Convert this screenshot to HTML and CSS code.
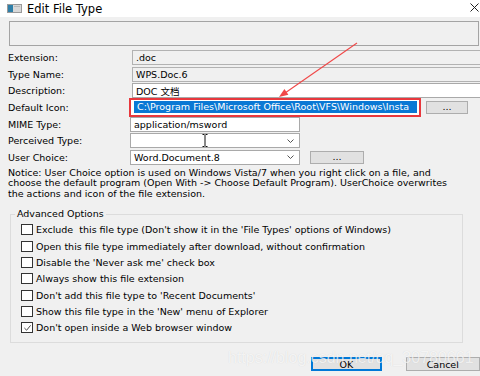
FILE: index.html
```html
<!DOCTYPE html>
<html>
<head>
<meta charset="utf-8">
<link rel="stylesheet" href="styles.css">
</head>
<body>
<div class="window">
  <div class="titlebar">
    <svg class="app-icon" viewBox="0 0 15 9"><rect x="0.5" y="0.5" width="14" height="8" fill="#d8d8d8" stroke="#9a9a9a"/><rect x="1" y="1" width="5" height="7" fill="#2f7fa8"/><rect x="7" y="2" width="6" height="1" fill="#b8b8b8"/></svg>
    <span class="title">Edit File Type</span>
    <svg class="close" viewBox="0 0 9 9"><path d="M0.5 0.5 L8.5 8.5 M8.5 0.5 L0.5 8.5" stroke="#222" stroke-width="1"/></svg>
  </div>
  <div class="content">
    <div class="top-panel"></div>
    <div class="form">
      <label>Extension:</label>
      <div class="field readonly wide">.doc</div>
      <label>Type Name:</label>
      <div class="field readonly wide">WPS.Doc.6</div>
      <label>Description:</label>
      <div class="field wide">DOC 文档</div>
      <label>Default Icon:</label>
      <div class="row">
        <div class="field icon-field"><span class="sel">C:\Program Files\Microsoft Office\Root\VFS\Windows\Insta</span></div>
        <button class="btn dots icon-dots">...</button>
      </div>
      <label>MIME Type:</label>
      <div class="row"><div class="field narrow">application/msword</div></div>
      <label>Perceived Type:</label>
      <div class="row"><div class="field narrow combo"><span></span><svg class="chev" viewBox="0 0 7 4"><path d="M0.5 0.5 L3.5 3.5 L6.5 0.5" fill="none" stroke="#555"/></svg></div></div>
      <label>User Choice:</label>
      <div class="row">
        <div class="field narrow combo"><span>Word.Document.8</span><svg class="chev" viewBox="0 0 7 4"><path d="M0.5 0.5 L3.5 3.5 L6.5 0.5" fill="none" stroke="#555"/></svg></div>
        <button class="btn dots choice-dots">...</button>
      </div>
    </div>
    <p class="notice">Notice: User Choice option is used on Windows Vista/7 when you right click on a file, and<br>choose the default program (Open With -&gt; Choose Default Program). UserChoice overwrites<br>the actions and icon of the file extension.</p>
    <fieldset class="group">
      <legend>Advanced Options</legend>
      <div class="check"><span class="box"></span>Exclude&nbsp; this file type (Don't show it in the 'File Types' options of Windows)</div>
      <div class="check"><span class="box"></span>Open this file type immediately after download, without confirmation</div>
      <div class="check"><span class="box"></span>Disable the 'Never ask me' check box</div>
      <div class="check"><span class="box"></span>Always show this file extension</div>
      <div class="check"><span class="box"></span>Don't add this file type to 'Recent Documents'</div>
      <div class="check"><span class="box"></span>Show this file type in the 'New' menu of Explorer</div>
      <div class="check"><span class="box"><svg viewBox="0 0 10 9"><path d="M1.5 4.5 L4 7 L8.5 1.5" fill="none" stroke="#333" stroke-width="1"/></svg></span>Don't open inside a Web browser window</div>
    </fieldset>
    <div class="footer">
      <button class="btn ok">OK</button>
      <button class="btn cancel">Cancel</button>
    </div>
  </div>
  <svg class="annot" viewBox="0 0 480 376">
    <path d="M357 43 L285 93" stroke="#f04848" stroke-width="1.1" fill="none"/>
    <polygon points="279,97 288.4,94.8 284.4,89" fill="#f04848"/>
    <path d="M202.5 134.5 H204.5 M205.5 134.5 H207.5 M205 135 V146 M202.5 146.5 H204.5 M205.5 146.5 H207.5" stroke="#111" stroke-width="1" fill="none"/>
  </svg>
  <div class="watermark">https://blog.csdn.net/qq_30780661</div>
</div>
</body>
</html>
```
FILE: styles.css
```css
html, body {
  margin: 0;
  background: #f0f0f0;
}
body {
  font-family: "DejaVu Sans", "Noto Sans CJK SC", sans-serif;
  font-size: 9.5px;
  color: #000;
}
.window {
  position: relative;
  width: 480px;
  height: 376px;
  overflow: hidden;
  background: #f0f0f0;
}
.titlebar {
  height: 17px;
  background: #fff;
  display: flex;
  align-items: center;
}
.app-icon {
  width: 15px;
  height: 9px;
  margin-left: 7px;
}
.title {
  margin-left: 5px;
  font-size: 11.5px;
}
.close {
  width: 9px;
  height: 9px;
  margin-left: auto;
  margin-right: 1px;
  margin-top: -2px;
}
.content {
  padding: 4px 0 0 8px;
}
.top-panel {
  margin-left: 1px;
  width: 468px;
  height: 23px;
  border: 1px solid #a4a4a4;
}
.form {
  display: grid;
  grid-template-columns: 122px 1fr;
  grid-auto-rows: 15px;
  row-gap: 1.67px;
  margin-top: 4px;
}
.form label {
  display: flex;
  align-items: center;
}
.row {
  display: flex;
  align-items: center;
}
.field {
  box-sizing: border-box;
  height: 15px;
  border: 1px solid #a9a9a9;
  background: #fff;
  display: flex;
  align-items: center;
  padding-left: 3px;
  white-space: nowrap;
  overflow: hidden;
}
.readonly {
  background: #f0f0f0;
  border-color: #b2b2b2;
}
.wide {
  margin-left: 2px;
  width: 370px;
}
.narrow {
  width: 170px;
}
.combo {
  justify-content: space-between;
  padding-right: 5px;
}
.chev {
  width: 7px;
  height: 4px;
}
.icon-field {
  margin-left: 1px;
  width: 288px;
  padding: 1px 1px 1px 2px;
  border-color: #fff;
  outline: 2px solid #e8383d;
}
.sel {
  display: block;
  height: 12px;
  line-height: 12px;
  background: #0a78d4;
  color: #fff;
  padding-left: 3px;
  flex: 1;
  overflow: hidden;
  white-space: nowrap;
}
.btn {
  box-sizing: border-box;
  height: 13px;
  border: 1px solid #adadad;
  background: #e1e1e1;
  font: inherit;
  color: #000;
  padding: 0;
  display: flex;
  align-items: center;
  justify-content: center;
}
.dots {
  line-height: 1;
  padding-bottom: 2px;
}
.icon-dots {
  margin-left: 7px;
  width: 42px;
}
.choice-dots {
  margin-left: 10px;
  width: 54px;
}
.notice {
  margin: 3px 0 0 0;
  line-height: 10.5px;
  white-space: nowrap;
}
.group {
  box-sizing: border-box;
  margin: 9px 0 0 2px;
  width: 453px;
  border: 1px solid #dcdcdc;
  padding: 1px 0 6px 10px;
}
.group legend {
  padding: 0 2px;
  margin-left: -6px;
  line-height: 12px;
}
.check {
  display: flex;
  align-items: center;
  height: 16.4px;
  white-space: nowrap;
}
.box {
  box-sizing: border-box;
  width: 12px;
  height: 11px;
  border: 1px solid #333;
  background: #fff;
  margin-right: 3px;
  display: flex;
  align-items: center;
  justify-content: center;
}
.box svg {
  width: 9px;
  height: 8px;
}
.footer {
  display: flex;
  gap: 24px;
  margin-top: 14px;
  padding-left: 303px;
}
.ok {
  width: 72px;
  height: 14px;
  border: 1px solid #0078d7;
  box-shadow: inset 0 0 0 1px #0078d7;
}
.cancel {
  width: 76px;
  height: 14px;
}
.annot {
  position: absolute;
  left: 0;
  top: 0;
  width: 480px;
  height: 376px;
  pointer-events: none;
}
.watermark {
  position: absolute;
  left: 228px;
  top: 349px;
  font-family: "Liberation Sans", Arial, sans-serif;
  font-size: 16px;
  color: rgba(255, 255, 255, 0.72);
  text-shadow: 0 0 1px rgba(0, 0, 0, 0.12);
  white-space: nowrap;
  pointer-events: none;
}
```
